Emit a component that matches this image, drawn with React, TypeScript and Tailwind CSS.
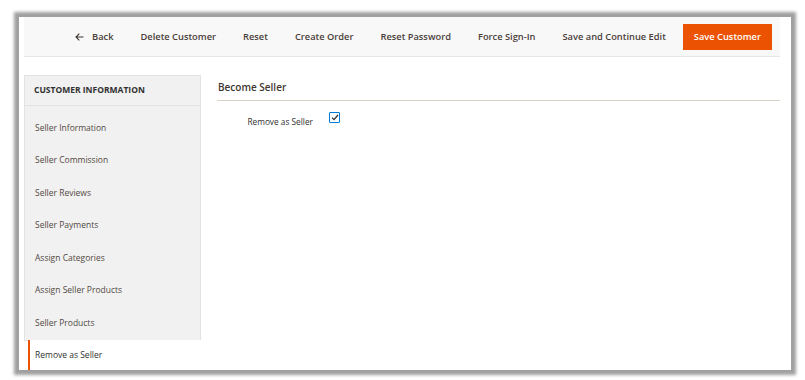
import React from 'react'

const actions = ['Delete Customer', 'Reset', 'Create Order', 'Reset Password', 'Force Sign-In', 'Save and Continue Edit']

const tabs = [
  'Seller Information',
  'Seller Commission',
  'Seller Reviews',
  'Seller Payments',
  'Assign Categories',
  'Assign Seller Products',
  'Seller Products',
]

export default function App() {
  return (
    <div
      className="w-[805px] h-[380px] bg-white overflow-hidden pt-[17px] pl-[19px]"
      style={{ fontFamily: '"Open Sans", "Liberation Sans", sans-serif' }}
    >
      <div className="w-[772px] h-[353px] bg-white shadow-[0_0_3px_5px_#a0a0a0] overflow-hidden pl-[5px] pr-[11px]">
        {/* toolbar */}
        <div className="h-[40px] bg-[#f8f8f8] border-b border-[#e6e6e6] flex items-center justify-end pr-[8px] text-[9.3px] font-semibold text-[#4a403a] whitespace-nowrap">
          <div className="flex items-center gap-[27px]">
            <span className="flex items-center gap-[8px]">
              <svg width="9" height="8" viewBox="0 0 9 8" fill="none" stroke="#41362f" strokeWidth="1.1">
                <path d="M8.5 4H1M4.3 0.7L1 4l3.3 3.3" />
              </svg>
              Back
            </span>
            {actions.map((a) => (
              <span key={a}>{a}</span>
            ))}
          </div>
          <button className="ml-[17px] h-[26px] px-[10px] bg-[#eb5202] text-white text-[9.3px] font-semibold border border-[#eb5202] whitespace-nowrap">
            Save Customer
          </button>
        </div>

        <div className="flex mt-[18px]">
          {/* sidebar */}
          <div className="w-[177px] shrink-0">
            <div className="bg-[#f1f1f1] border border-[#e3e3e3]">
              <div className="h-[30px] flex items-center pl-[9px] border-b border-[#e3e3e3] text-[8.5px] font-bold text-[#303030] whitespace-nowrap">
                CUSTOMER INFORMATION
              </div>
              <div className="pt-[6px]">
                {tabs.map((t) => (
                  <div key={t} className="h-[32.5px] flex items-center pl-[10px] text-[8.5px] text-[#514943] whitespace-nowrap">
                    {t}
                  </div>
                ))}
              </div>
            </div>
            <div className="ml-[4px] h-[40px] border-l-2 border-[#eb5202] bg-white flex items-center pl-[5px] -mt-px text-[8.5px] text-[#303030] whitespace-nowrap">
              <span className="-mt-[8px]">Remove as Seller</span>
            </div>
          </div>

          {/* main */}
          <div className="flex-1 ml-[16px]">
            <div className="h-[26px] flex items-center pl-[1px] border-b border-[#d9d3c6] text-[10px] font-semibold text-[#41362f]">
              Become Seller
            </div>
            <div className="flex items-start mt-[11px]">
              <span className="w-[96px] text-right text-[8.3px] text-[#303030] mt-[4px] whitespace-nowrap">Remove as Seller</span>
              <span className="ml-[16px] w-[11px] h-[11px] border border-[#007bdb] rounded-[1px] flex items-center justify-center">
                <svg width="8" height="7" viewBox="0 0 8 7" fill="none" stroke="#303030" strokeWidth="1.3">
                  <path d="M1 3.6L3 5.6 7 1" />
                </svg>
              </span>
            </div>
          </div>
        </div>
      </div>
    </div>
  )
}
